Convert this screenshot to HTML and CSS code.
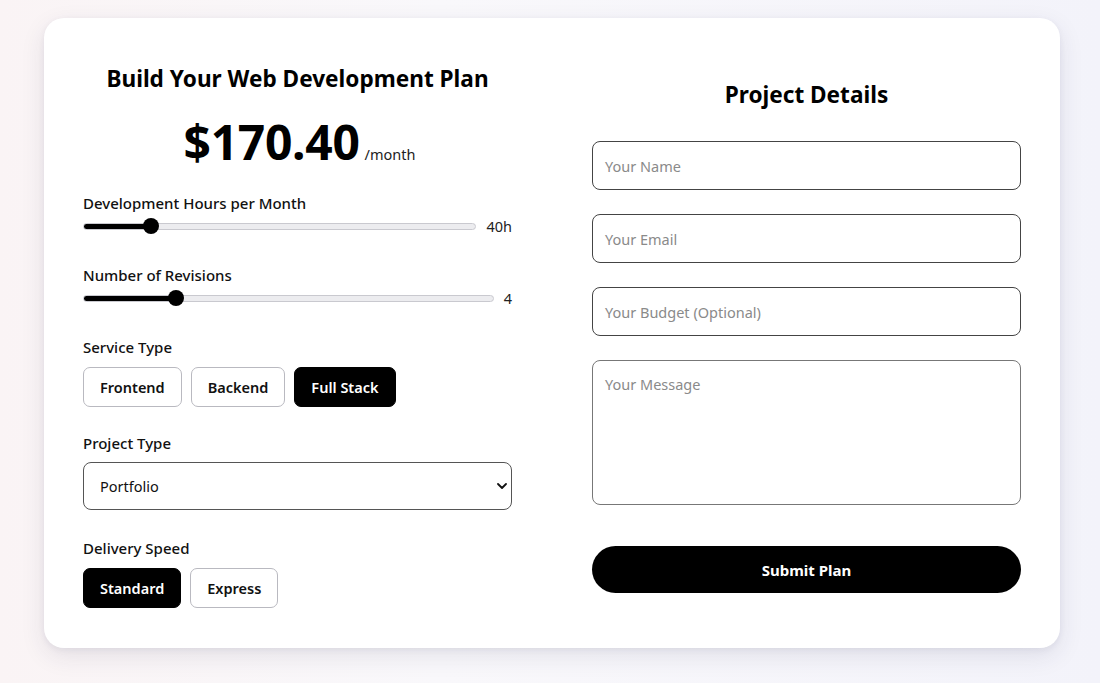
FILE: index.html
```html
<!DOCTYPE html>
<html lang="en">
<head>
<meta charset="utf-8">
<title>Web Development Plan</title>
<link rel="stylesheet" href="styles.css">
</head>
<body>
<main class="card">
  <section class="col plan">
    <h1 class="title">Build Your Web Development Plan</h1>
    <div class="price"><span class="amount">$170.40</span><span class="per">/month</span></div>

    <div class="field first">
      <label class="label">Development Hours per Month</label>
      <div class="slider-row">
        <input class="range" type="range" min="10" max="200" value="40" style="--pct:15.8%">
        <span class="val">40h</span>
      </div>
    </div>

    <div class="field">
      <label class="label">Number of Revisions</label>
      <div class="slider-row">
        <input class="range" type="range" min="1" max="15" value="4" style="--pct:21.4%">
        <span class="val">4</span>
      </div>
    </div>

    <div class="field">
      <label class="label">Service Type</label>
      <div class="btn-row">
        <button class="opt">Frontend</button>
        <button class="opt">Backend</button>
        <button class="opt active">Full Stack</button>
      </div>
    </div>

    <div class="field">
      <label class="label">Project Type</label>
      <div class="select">
        <span>Portfolio</span>
        <svg class="chev" viewBox="0 0 10 6" width="10" height="6"><path d="M1 1 L5 5 L9 1" fill="none" stroke="#111" stroke-width="1.8" stroke-linecap="round" stroke-linejoin="round"/></svg>
      </div>
    </div>

    <div class="field last">
      <label class="label">Delivery Speed</label>
      <div class="btn-row">
        <button class="opt active">Standard</button>
        <button class="opt">Express</button>
      </div>
    </div>
  </section>

  <section class="col details">
    <h2 class="title title2">Project Details</h2>
    <div class="inputs">
      <div class="input">Your Name</div>
      <div class="input">Your Email</div>
      <div class="input">Your Budget (Optional)</div>
      <div class="input area">Your Message</div>
    </div>
    <button class="submit">Submit Plan</button>
  </section>
</main>
</body>
</html>
```

FILE: styles.css
```css
html, body {
  margin: 0;
  padding: 0;
}
body {
  width: 1100px;
  height: 683px;
  overflow: hidden;
  background: linear-gradient(90deg, #faf4f5 0%, #f9f8fb 40%, #f3f3fa 100%);
  font-family: "Noto Sans", "Open Sans", sans-serif;
  color: #111;
  box-sizing: border-box;
  padding: 18px 40px 0 44px;
}
.card {
  width: 1016px;
  height: 630px;
  box-sizing: border-box;
  background: #fff;
  border-radius: 20px;
  box-shadow: 0 8px 24px rgba(40, 40, 80, 0.10), 0 2px 6px rgba(40,40,80,0.06);
  padding: 0 39px;
  display: grid;
  grid-template-columns: 429px 429px;
  column-gap: 80px;
}
.col {
  display: flex;
  flex-direction: column;
}
.title {
  margin: 0;
  font-size: 22.6px;
  font-weight: 700;
  text-align: center;
  color: #000;
  line-height: 28px;
}
.plan .title {
  margin-top: 47px;
}
.price {
  display: flex;
  justify-content: center;
  align-items: baseline;
  margin-top: 19px;
  margin-left: 4px;
  height: 60px;
}
.amount {
  font-size: 48px;
  font-weight: 700;
  letter-spacing: -0.3px;
  color: #000;
  line-height: 60px;
}
.per {
  font-size: 14.5px;
  margin-left: 5px;
  color: #222;
}
.field {
  display: flex;
  flex-direction: column;
  margin-top: 26px;
}
.field.first { margin-top: 21px; }
.field.last { margin-top: 28px; }
.label {
  font-size: 15px;
  font-weight: 500;
  line-height: 20px;
  color: #111;
}
.slider-row {
  display: flex;
  align-items: center;
  gap: 10px;
  height: 26px;
}
.range {
  -webkit-appearance: none;
  appearance: none;
  flex: 1;
  height: 7px;
  margin: 0;
  border-radius: 4px;
  border: 1px solid #c9c9cf;
  background: linear-gradient(90deg, #000 0, #000 var(--pct), #ececef var(--pct), #ececef 100%);
  box-sizing: border-box;
}
.range::-webkit-slider-thumb {
  -webkit-appearance: none;
  appearance: none;
  width: 16px;
  height: 16px;
  border-radius: 50%;
  background: #000;
}
.val {
  font-size: 14.5px;
  color: #222;
  min-width: 8px;
  text-align: right;
}
.btn-row {
  display: flex;
  gap: 9px;
  margin-top: 10px;
}
.opt {
  font-family: inherit;
  font-size: 14.5px;
  font-weight: 600;
  height: 40px;
  padding: 0 16px;
  border-radius: 7px;
  border: 1px solid #b9b9c0;
  background: #fff;
  color: #111;
}
.opt.active {
  background: #000;
  color: #fff;
  border-color: #000;
}
.select {
  margin-top: 9px;
  height: 48px;
  box-sizing: border-box;
  border: 1px solid #555;
  border-radius: 8px;
  display: flex;
  align-items: center;
  justify-content: space-between;
  padding: 0 4px 0 16px;
  font-size: 14.5px;
  color: #111;
}
.details .title2 {
  margin-top: 63px;
}
.inputs {
  display: flex;
  flex-direction: column;
  gap: 24px;
  margin-top: 32px;
}
.input {
  height: 49px;
  box-sizing: border-box;
  border: 1px solid #444;
  border-radius: 8px;
  padding: 0 12px;
  display: flex;
  align-items: center;
  font-size: 14.5px;
  color: #8a8a8a;
}
.input.area {
  height: 145px;
  align-items: flex-start;
  padding-top: 13px;
  border-color: #777;
}
.submit {
  margin-top: 41px;
  height: 47px;
  border: none;
  border-radius: 24px;
  background: #000;
  color: #fff;
  font-family: inherit;
  font-size: 15px;
  font-weight: 700;
}
```
